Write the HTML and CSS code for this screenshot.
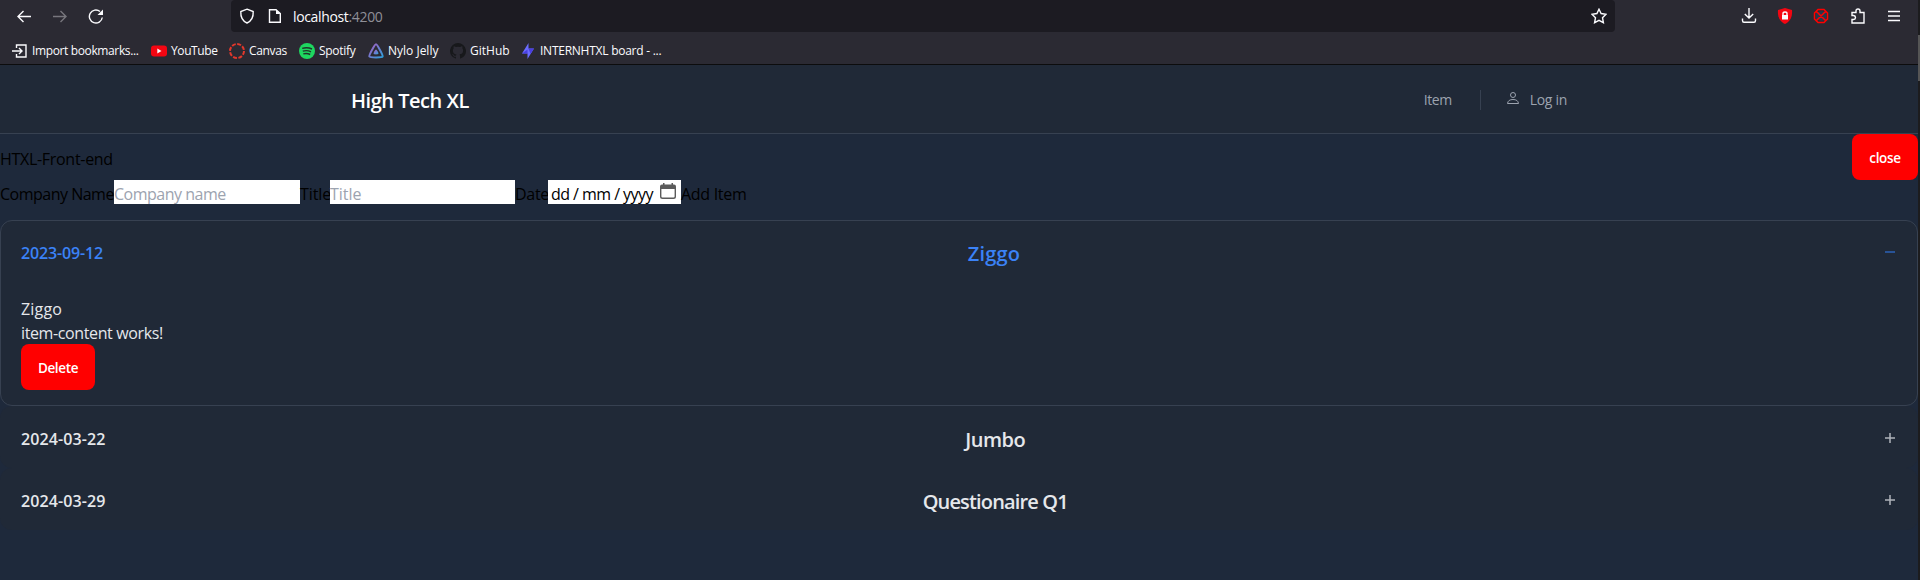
FILE: index.html
```
<!DOCTYPE html>
<html lang="en">
<head>
<meta charset="utf-8">
<title>High Tech XL</title>
<link rel="stylesheet" href="styles.css">
</head>
<body>
<div class="window">
<div class="browser">
  <div class="toolbar">
    <div class="nav-buttons">
      <svg class="i16" viewBox="0 0 16 16"><path d="M15 8.500H2M7.500 3L2 8.500L7.500 14"/></svg>
      <svg class="i16 dim" viewBox="0 0 16 16"><path d="M1 8.500H14M8.500 3L14 8.500L8.500 14"/></svg>
      <svg class="i16" viewBox="0 0 16 16"><path d="M14.300 9.500A6.500 6.500 0 1 1 12 3.500"/><path class="fill" d="M15 1.500V7H9.500Z"/></svg>
    </div>
    <div class="urlbar">
      <svg class="i16" viewBox="0 0 16 16"><path d="M8 1.200L14.200 3.500C14.500 9 12.500 13 8 15C3.500 13 1.500 9 1.800 3.500Z"/></svg>
      <svg class="i16 page-icon" viewBox="0 0 16 16"><path d="M2.500 1.800H9L13.300 5.500V14.200H2.500Z"/><path class="fill" d="M9 1.500V6H13.500Z"/></svg>
      <span class="url">localhost<span class="port">:4200</span></span>
      <svg class="i16 star" viewBox="0 0 16 16"><path d="M8 1.200L10.100 5.500L15 6.200L11.500 9.700L12.400 14.600L8 12.300L3.600 14.600L4.500 9.700L1 6.200L5.900 5.500Z"/></svg>
    </div>
    <div class="extensions">
      <svg class="i16" viewBox="0 0 16 16"><path d="M8 0V10M3.800 6L8 10L12.200 6M1.500 10.500V12.500Q1.500 14.300 3 14.300H13Q14.500 14.300 14.500 12.500V10.500"/></svg>
      <svg class="i16" viewBox="0 0 16 16"><path class="red" d="M8 0L15 2C15.500 8 14 13 8 16C2 13 .5 8 1 2Z"/><path d="M6 7V5.500Q6 4 8 4T10 5.500V7"/><rect class="fill" x="5" y="7" width="6" height="4.500"/></svg>
      <svg class="i16" viewBox="0 0 16 16"><path class="slate" d="M3 5L8 3L13 4V12L8 13L3 11Z"/><path class="ring" d="M5 1.500H11L14.500 5V11L11 14.500H5L1.500 11V5ZM3.500 3.500L12.500 12.500M12.500 3.500L3.500 12.500"/></svg>
      <svg class="i16" viewBox="0 0 16 16"><path d="M2 4.500H6V3Q6 1 8 1T10 3V4.500H14V15H2V11.500H3.500Q5.500 11.300 5.500 9.500T3.500 7.500H2Z"/></svg>
      <svg class="i16" viewBox="0 0 16 16"><path d="M2 3.500H14M2 8H14M2 12.500H14"/></svg>
    </div>
  </div>
  <div class="bookmarks">
    <span class="bm b1"><svg class="i16" viewBox="0 0 16 16"><path d="M4.500 5V2H14V14H4.500V11M0 8H9.500M7 5L10 8L7 11"/></svg><span>Import bookmarks...</span></span>
    <span class="bm b2"><svg class="i16" viewBox="0 0 16 16"><rect class="red" x="0" y="2.500" width="16" height="11" rx="3"/><path class="fill" d="M6.300 5.500V10.500L10.500 8Z"/></svg><span>YouTube</span></span>
    <span class="bm b3"><svg class="i16" viewBox="0 0 16 16"><circle class="canvas" cx="8" cy="8" r="7"/></svg><span>Canvas</span></span>
    <span class="bm b4"><svg class="i16" viewBox="0 0 16 16"><circle class="green" cx="8" cy="8" r="8"/><path class="waves" d="M3.200 5.300Q8.500 3.800 13 6M3.800 8.200Q8 6.900 12 8.800M4.300 10.900Q8 9.900 11.200 11.500"/></svg><span>Spotify</span></span>
    <span class="bm b5"><svg class="i16" viewBox="0 0 16 16"><defs><linearGradient id="jelly" x2="1" y2="1"><stop stop-color="#aa5cc3"/><stop offset="1" stop-color="#2ea0dd"/></linearGradient></defs><path class="jelly" d="M8 1.300C6.800 1.300 .7 12.300 1.400 13.500S14 14.700 14.600 13.500S9.200 1.300 8 1.300Z"/><path class="jelly-core" d="M8 6.500C7.200 6.500 5.300 10 5.600 10.800S10 11.600 10.400 10.800S8.800 6.500 8 6.500Z"/></svg><span>Nylo Jelly</span></span>
    <span class="bm b6"><svg class="i16" viewBox="0 0 16 16"><path class="cat" d="M8 0A8 8 0 0 0 5.500 15.600C5.900 15.700 6 15.400 6 15.200V13.700C3.800 14.200 3.300 12.700 3.300 12.700C2.900 11.800 2.400 11.500 2.400 11.500C1.700 11 2.500 11 2.500 11C3.300 11.100 3.700 11.900 3.700 11.900C4.400 13.100 5.600 12.700 6 12.500C6.100 12 6.300 11.600 6.500 11.400C4.700 11.200 2.900 10.500 2.900 7.500C2.900 6.600 3.200 5.900 3.700 5.300C3.600 5.100 3.300 4.300 3.800 3.200C3.800 3.200 4.500 3 6 4Q8 3.500 10 4C11.500 3 12.200 3.200 12.200 3.200C12.700 4.300 12.400 5.100 12.300 5.300C12.800 5.900 13.100 6.600 13.100 7.500C13.100 10.500 11.300 11.200 9.500 11.400C9.800 11.600 10 12.100 10 12.900V15.200C10 15.400 10.100 15.700 10.500 15.600A8 8 0 0 0 8 0Z"/></svg><span>GitHub</span></span>
    <span class="bm b7"><svg class="i16" viewBox="0 0 16 16"><path class="bolt" d="M8.500 0V5.500H14L7.500 16V10.500H2Z"/><path class="bolt-dark" d="M8.500 5.500H14L10.500 11ZM2 10.500H7.500V6.500Z"/></svg><span>INTERNHTXL board - ...</span></span>
  </div>
</div>
<main class="page">
  <header class="site-header">
    <span class="brand">High Tech XL</span>
    <nav class="site-nav">
      <span class="item">Item</span>
      <span class="login"><svg class="user" viewBox="0 0 12 12"><circle cx="6" cy="3" r="2.500"/><path d="M.5 11.500Q1 7.500 6 7.500T11.500 11.500Z"/></svg><span class="login-text">Log in</span></span>
    </nav>
  </header>
  <div class="title-row"><span class="app-title">HTXL-Front-end</span><button class="btn close">close</button></div>
  <div class="form">
    <label class="l-company">Company Name</label><div class="input w-company"><span>Company name</span></div>
    <label class="l-title">Title</label><div class="input w-title"><span>Title</span></div>
    <label class="l-date">Date</label><div class="input w-date"><span class="date-text">dd / mm / yyyy</span><svg class="cal" viewBox="0 0 16 16"><path class="cal-top" d="M0 6V3.500Q0 1.500 2 1.500H3V0H4.500V1.500H11.500V0H13V1.500H14Q16 1.500 16 3.500V6Z"/><path class="cal-box" d="M.7 5V13.500Q.7 15.300 2.500 15.300H13.500Q15.300 15.300 15.300 13.500V5"/></svg></div>
    <span class="add">Add Item</span>
  </div>
  <section class="accordion">
    <article class="panel open">
      <div class="panel-head"><span class="date d1">2023-09-12</span><span class="name n1">Ziggo</span><svg class="toggle" viewBox="0 0 10 10"><path d="M0 5H10"/></svg></div>
      <div class="panel-body">
        <span class="t-ziggo">Ziggo</span>
        <span class="t-works">item-content works!</span>
        <button class="btn delete">Delete</button>
      </div>
    </article>
    <article class="panel">
      <div class="panel-head"><span class="date">2024-03-22</span><span class="name n2">Jumbo</span><svg class="toggle" viewBox="0 0 10 10"><path d="M0 5H10M5 0V10"/></svg></div>
    </article>
    <article class="panel">
      <div class="panel-head"><span class="date">2024-03-29</span><span class="name n3">Questionaire Q1</span><svg class="toggle" viewBox="0 0 10 10"><path d="M0 5H10M5 0V10"/></svg></div>
    </article>
  </section>
</main>
</div>
<div class="scrollbar"><div class="thumb"></div></div>
</body>
</html>
```
FILE: styles.css
```
* { box-sizing: border-box; }
body { margin: 0; width: 1920px; height: 580px; overflow: hidden; display: flex; background: #1e293b; font: 16px/24px "Open Sans", "Noto Sans", sans-serif; color: #000; white-space: nowrap; }
svg { display: block; flex: none; fill: none; stroke: #fbfbfe; stroke-width: 1.4; }
.fill { fill: #fbfbfe; stroke: none; }
.i16 { width: 16px; height: 16px; }
.dim { stroke: #77767d; }
.red { fill: #f40612; stroke: none; }
.slate { fill: #26384d; stroke: none; }
.ring { stroke: #f00; stroke-width: 1.5; }
.canvas { stroke: #e2382c; stroke-width: 2; stroke-dasharray: 4 1.500; }
.green { fill: #1ed760; stroke: none; }
.waves { stroke: #20352a; stroke-width: 1.4; }
.jelly { stroke: url(#jelly); stroke-width: 2; }
.jelly-core { fill: url(#jelly); stroke: none; }
.cat { fill: #17181b; stroke: none; }
.bolt { fill: #6b6cff; stroke: none; }
.bolt-dark { fill: #4a3fe0; stroke: none; }

.window { width: 1918px; flex: none; }
.browser { height: 65px; background: #2b2a33; border-bottom: 1px solid #0c0c0d; color: #fbfbfe; }
.toolbar { height: 32px; display: flex; }
.nav-buttons { width: 231px; flex: none; padding: 8px 0 0 16px; display: flex; gap: 20px; }
.urlbar { width: 1384px; flex: none; background: #1c1b22; border-radius: 4px; display: flex; align-items: center; padding: 0 8px; }
.page-icon { margin-left: 12px; }
.url { margin-left: 10px; font-size: 14px; letter-spacing: -.35px; padding-top: 2px; }
.port { color: #8f8f97; }
.star { margin-left: auto; }
.extensions { padding: 8px 0 0 126px; display: flex; gap: 20.200px; }
.bookmarks { height: 32px; display: flex; font-size: 12px; padding: 3px 0 0 12px; }
.bm { display: flex; align-items: center; gap: 4px; height: 32px; flex: none; }
.b1 { width: 139px; letter-spacing: -.37px; }
.b2 { width: 78px; letter-spacing: -.4px; }
.b3 { width: 70px; letter-spacing: -.35px; }
.b4 { width: 69px; letter-spacing: -.3px; }
.b5 { width: 82px; }
.b6 { width: 70px; }
.b7 { letter-spacing: -.25px; }

.scrollbar { width: 2px; height: 580px; flex: none; background: #1c1c1e; padding-top: 35px; }
.thumb { height: 46px; background: #555; }
.site-header { height: 69px; background: #202937; border-bottom: 1px solid #374151; display: flex; align-items: center; justify-content: space-between; padding: 3px 351px 0 351px; }
.brand { font-size: 20px; font-weight: 600; color: #fff; line-height: 28px; letter-spacing: -.48px; }
.site-nav { display: flex; height: 20px; align-items: center; font-size: 14px; line-height: 20px; color: #9ca3af; margin-top: -2px; }
.item { width: 56px; letter-spacing: -.4px; }
.login { display: flex; align-items: center; height: 20px; border-left: 1px solid #374151; padding-left: 26px; gap: 11px; letter-spacing: -.3px; }
.user { width: 12px; height: 12px; stroke: #9ca3af; stroke-width: 1; margin-top: -3px; }
.title-row { display: flex; justify-content: space-between; height: 46px; align-items: center; }
.app-title { padding-top: 3px; letter-spacing: -.3px; }
.btn { height: 46px; border: 0; border-radius: 8px; background: #f00; color: #fff; font: 600 13.5px/20px "Open Sans", sans-serif; padding: 2px 0 0; letter-spacing: -.35px; }
.close { width: 66px; }
.delete { width: 74px; }
.form { display: flex; height: 24px; line-height: 28px; }
.form label { flex: none; }
.l-company { width: 114px; letter-spacing: -.5px; }
.l-title { width: 30px; letter-spacing: -.1px; }
.l-date { width: 33px; letter-spacing: -.3px; }
.input { height: 24px; background: #fff; color: #9ca3af; flex: none; }
.w-company { width: 186px; letter-spacing: -.5px; }
.w-title { width: 185px; }
.w-date { width: 133px; color: #000; display: flex; padding: 0 5px 0 3px; justify-content: space-between; letter-spacing: -.55px; }
.cal { width: 16px; height: 16px; margin-top: 3px; }
.cal-top { fill: #5b5b5b; stroke: none; }
.cal-box { stroke: #5b5b5b; }
.add { letter-spacing: -.3px; }
.accordion { margin-top: 16px; color: #e5e7eb; }
.panel { height: 62px; background: #202937; border-radius: 12px; border: 1px solid transparent; background-clip: border-box; padding: 0 20px; }
.panel.open { height: 186px; border-color: #374151; }
.panel-head { display: flex; justify-content: space-between; align-items: center; height: 62px; padding: 3px 2px 0 0; font-weight: 600; }
.date { margin-bottom: 2px; letter-spacing: .1px; }
.d1 { letter-spacing: -.15px; }
.name { font-size: 20px; }
.n1 { letter-spacing: .2px; }
.n2 { letter-spacing: -.5px; }
.n3 { letter-spacing: -.85px; }
.open .panel-head { color: #3b82f6; }
.toggle { width: 10px; height: 10px; stroke: #aeb3ba; stroke-width: 1.5; margin-bottom: 3px; }
.open .toggle { stroke: #2b62b8; }
.panel-body { display: flex; flex-direction: column; align-items: flex-start; padding-top: 14px; }
.t-ziggo { letter-spacing: .2px; }
.t-works { letter-spacing: -.38px; }
.panel-body .btn { margin-top: -1px; }
```
